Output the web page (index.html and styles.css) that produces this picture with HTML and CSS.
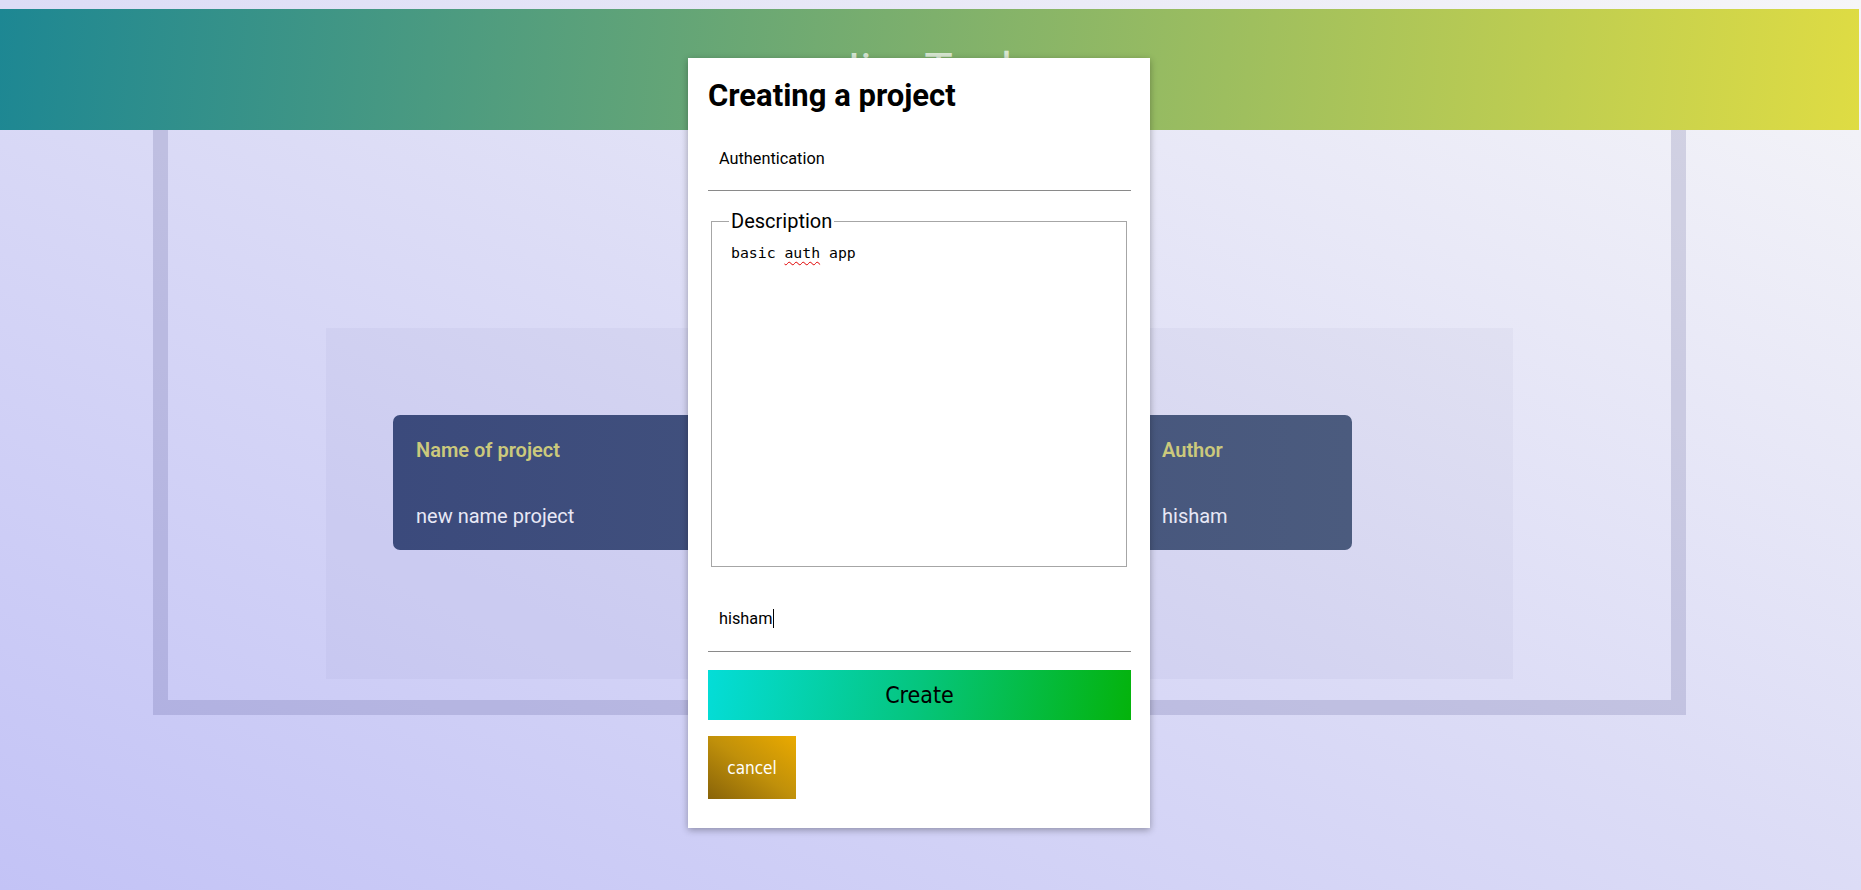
FILE: index.html
```html
<!DOCTYPE html>
<html lang="en">
<head>
<meta charset="utf-8">
<title>Creating a project</title>
<link rel="stylesheet" href="styles.css">
</head>
<body>
<header class="topbar">
  <h1 class="brand">Jira Task</h1>
</header>
<main class="stage">
  <section class="frame">
    <div class="panel">
      <div class="card">
        <div class="col">
          <div class="label">Name of project</div>
          <div class="value">new name project</div>
        </div>
        <div class="col">
          <div class="label">Description</div>
          <div class="value">basic auth app</div>
        </div>
        <div class="col">
          <div class="label">Author</div>
          <div class="value">hisham</div>
        </div>
      </div>
    </div>
  </section>
</main>

<div class="modal">
  <h2 class="modal-title">Creating a project</h2>
  <div class="field field-name">Authentication</div>
  <fieldset class="desc">
    <legend class="desc-legend">Description</legend>
    <div class="desc-text">basic <span class="misspelled">auth</span> app</div>
  </fieldset>
  <div class="field field-author">hisham<span class="caret"></span></div>
  <button class="btn-create" type="button">Create</button>
  <button class="btn-cancel" type="button">cancel</button>
</div>
</body>
</html>
```

FILE: styles.css
```css
html {
  height: 100%;
}

body {
  margin: 0;
  min-height: 100%;
  padding-top: 9px;
  box-sizing: border-box;
  font-family: Roboto, "Liberation Sans", sans-serif;
  background: linear-gradient(to top right, #c3c3f6 0%, #dcdcf6 50%, #f6f6f8 100%);
  overflow: hidden;
}

.topbar {
  height: 121px;
  margin-right: 2px;
  box-sizing: border-box;
  padding-top: 38px;
  background: linear-gradient(95deg, #1d8793 0%, #7eb06c 50%, #dfdc43 100%);
}

.brand {
  margin: 0;
  text-align: center;
  font: 400 48px/48px Roboto, sans-serif;
  color: rgba(255, 255, 255, 0.7);
}

.stage {
  padding-left: 153px;
}

.frame {
  width: 1533px;
  height: 585px;
  box-sizing: border-box;
  border: 15px solid rgba(50, 50, 120, 0.16);
  border-top: 0;
  padding: 198px 158px 20px;
}

.panel {
  height: 351px;
  box-sizing: border-box;
  padding: 87px 161px 0 67px;
  background: rgba(70, 70, 130, 0.045);
}

.card {
  height: 135px;
  box-sizing: border-box;
  border-radius: 7px;
  padding: 23px 23px 0;
  display: grid;
  grid-template-columns: 373px 373px 1fr;
  background: linear-gradient(90deg, #3b4a7c 0%, #4b5b7e 100%);
}

.label {
  font: 600 20px/24px Roboto, sans-serif;
  color: #cbc97c;
}

.value {
  margin-top: 42px;
  font: 400 20px/24px Roboto, sans-serif;
  color: #e8e8f6;
}

.modal {
  position: absolute;
  left: 688px;
  top: 58px;
  width: 462px;
  box-sizing: border-box;
  padding: 0 19px 29px 20px;
  background: #fff;
  box-shadow: 0 2px 7px rgba(0, 0, 0, 0.32);
}

.modal-title {
  margin: 0;
  height: 66px;
  box-sizing: border-box;
  padding-top: 22px;
  font: 700 31px/32px Roboto, sans-serif;
  color: #000;
}

.field {
  display: flex;
  align-items: center;
  box-sizing: border-box;
  padding-left: 11px;
  border-bottom: 1px solid #8a8a8a;
  font: 400 16.3px Roboto, sans-serif;
  color: #000;
}

.field-name {
  height: 67px;
  padding-top: 2px;
}

.field-author {
  height: 65px;
  margin-top: 20px;
  padding-bottom: 2px;
}

.caret {
  display: inline-block;
  width: 1px;
  height: 19px;
  margin-left: 1px;
  background: #000;
}

.desc {
  margin: 18px 4px 0 3px;
  padding: 0 14px 6px 19px;
  border: 1px solid #a6a6a6;
  min-width: 0;
}

.desc-legend {
  padding: 0 2px;
  margin-left: -2px;
  font: 400 20px Roboto, sans-serif;
  color: #000;
}

.desc-text {
  margin-top: 11px;
  height: 316px;
  font: 400 14.8px "DejaVu Sans Mono", monospace;
  color: #000;
}

.misspelled {
  text-decoration: underline wavy #e00000;
  text-decoration-thickness: 1px;
  text-underline-offset: 3px;
}

.btn-create {
  display: block;
  width: 100%;
  height: 50px;
  margin-top: 18px;
  border: 0;
  padding: 0;
  font: 400 23px "DejaVu Sans Condensed", "DejaVu Sans", sans-serif;
  font-stretch: condensed;
  color: #000;
  background: linear-gradient(100deg, #04ddd8 0%, #05c57d 50%, #04b30b 100%);
}

.btn-cancel {
  display: block;
  width: 88px;
  height: 63px;
  margin-top: 16px;
  border: 0;
  padding: 0;
  font: 400 17px "DejaVu Sans Condensed", "DejaVu Sans", sans-serif;
  font-stretch: condensed;
  color: #fff;
  background: linear-gradient(to top right, #886309 0%, #c0900a 50%, #eaaa00 100%);
}
```
